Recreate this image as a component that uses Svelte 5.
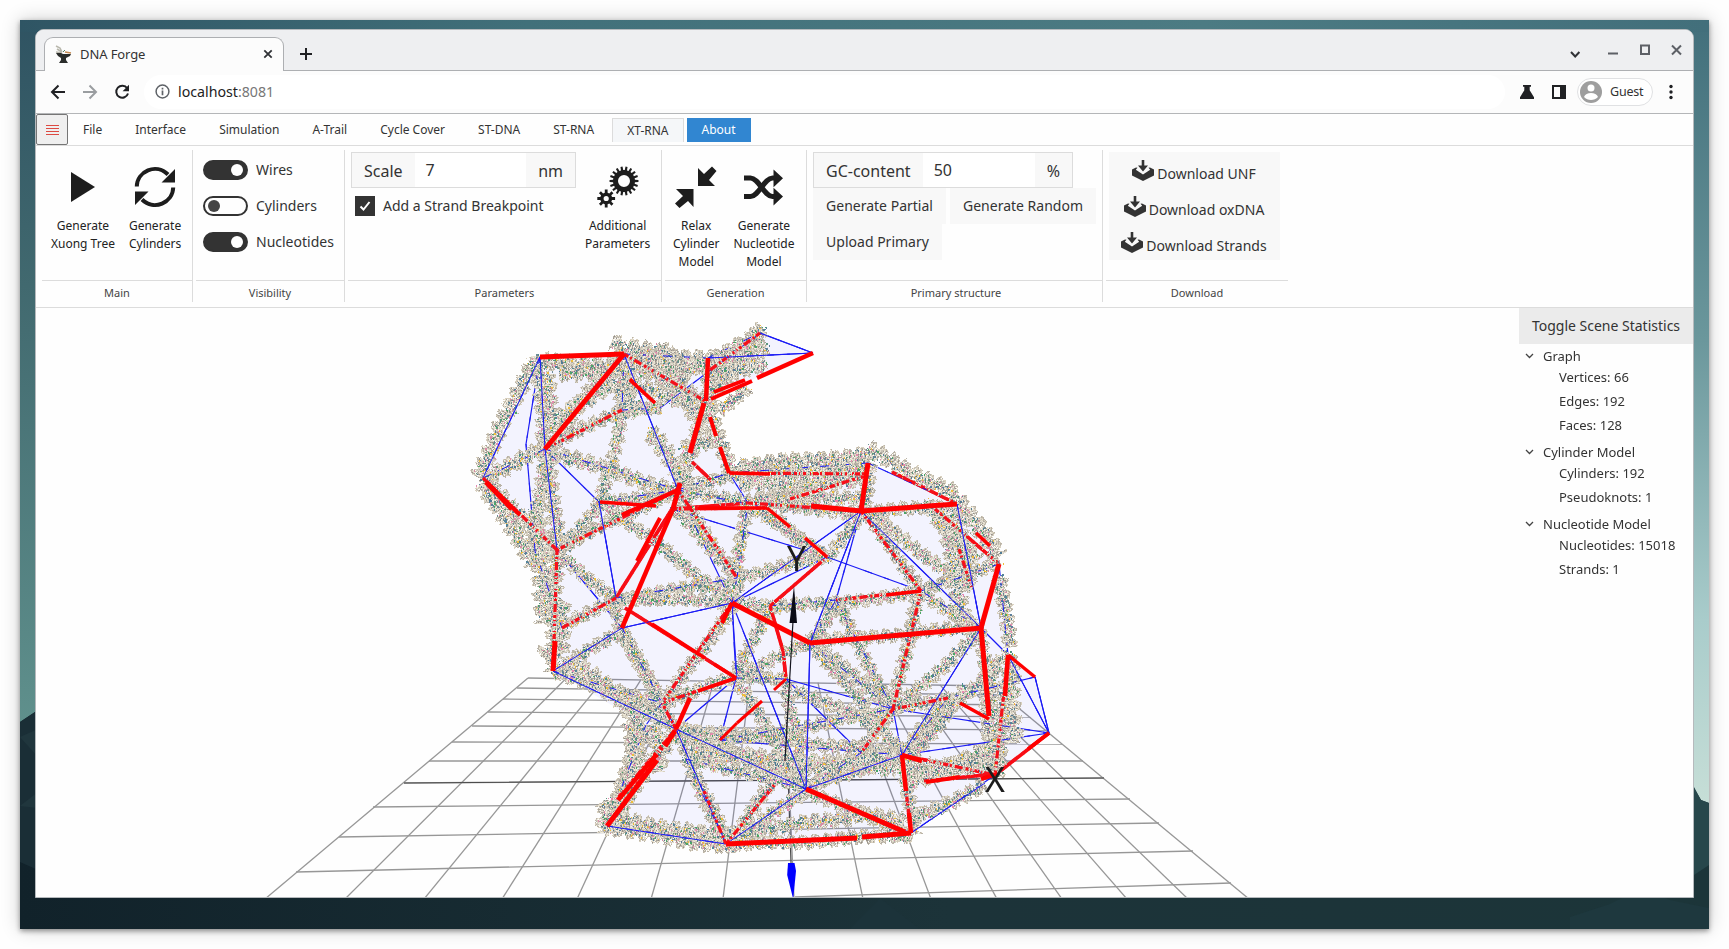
<script>
  import { onMount } from 'svelte';

  const tabs = ['File', 'Interface', 'Simulation', 'A-Trail', 'Cycle Cover', 'ST-DNA', 'ST-RNA', 'XT-RNA', 'About'];
  const toggles = [
    { name: 'Wires', on: true },
    { name: 'Cylinders', on: false },
    { name: 'Nucleotides', on: true }
  ];
  const downloads = ['Download UNF', 'Download oxDNA', 'Download Strands'];
  const stats = [
    { title: 'Graph', rows: ['Vertices: 66', 'Edges: 192', 'Faces: 128'] },
    { title: 'Cylinder Model', rows: ['Cylinders: 192', 'Pseudoknots: 1'] },
    { title: 'Nucleotide Model', rows: ['Nucleotides: 15018', 'Strands: 1'] }
  ];

  // Scene origin in window coordinates
  const OX = 36, OY = 307;

  // Mesh vertices after projection
  const V = {
    A: [540, 356], B: [624, 353], C: [708, 357], D: [760, 332], E: [813, 352], F: [705, 400],
    G: [545, 448], H: [483, 477], I: [729, 472], J: [678, 489], K: [599, 501], L: [557, 549],
    M: [616, 597], N: [622, 627], O: [732, 602], P: [622, 409], Q: [672, 508], R: [767, 507],
    S: [827, 556], T: [737, 577], U: [868, 462], V: [861, 510], W: [957, 503], X: [999, 563],
    Y: [981, 627], Z: [810, 642], a: [921, 590], b: [836, 599], c: [770, 605], d: [736, 677],
    e: [786, 678], f: [893, 708], g: [948, 697], h: [1008, 654], i: [1035, 676], j: [1049, 732],
    k: [806, 788], l: [726, 843], m: [911, 832], n: [902, 754], o: [995, 774], p: [861, 752],
    q: [720, 739], r: [553, 670], s: [662, 702], t: [676, 728], u: [607, 825], v: [617, 798],
    w: [646, 724], x: [526, 443], y: [535, 550], z: [660, 407], 1: [748, 502], 2: [970, 588],
    3: [562, 627], 4: [773, 782], 5: [686, 758]
  };
  const pairs = (s) => s.split(' ').map((p) => [...V[p[0]], ...V[p[1]]]);

  const blue = pairs(
    'AH AG Ax xy GH GJ GL BJ BP BC CD DE CE JI JR KM KJ KG MT NO rN Nt JO OT OV OS Od ZV Zb Zf Zk Ok VY WY Xh Yh hj ij ih ig Yn bf Sa de dq dt ef qf qn tl tk rt rs kn kl km mo ul wv fn ng UI UW CF Pz Dz Vb T1 1I bc 5l 5k jf jn QS Ya NL 3y sw ep Xa lt kp'
  );
  // Tree edges behind the strands
  const redBack = [
    ...pairs('HL JL Lr BF QR QM M3 Q1 1V ho gf fa fp ab aV cS no nm Os ts tu tv PG JT jo'),
    [770, 605, 783, 650], [783, 650, 786, 678], [625, 607, 736, 677], [736, 677, 662, 702],
    [630, 378, 656, 403], [959, 548, 972, 588], [726, 843, 775, 783], [726, 843, 704, 790],
    [924, 780, 995, 773], [935, 508, 999, 563], [892, 471, 957, 503], [790, 498, 868, 474],
    [729, 472, 868, 473], [760, 332, 706, 372], [692, 461, 712, 480]
  ];
  const redFront = [
    [540, 356, 624, 353, 5], [624, 353, 545, 448, 5], [708, 357, 706, 400, 4.5], [704, 402, 690, 452, 5], [680, 482, 673, 508, 5],
    [673, 508, 622, 627, 4.5], [678, 489, 622, 514, 4.5], [486, 481, 512, 508, 5], [555, 640, 553, 670, 5],
    [714, 391, 745, 379, 4], [757, 377, 813, 352, 4.5], [711, 398, 752, 380, 4],
    [710, 416, 716, 435, 4], [720, 446, 729, 472, 4], [730, 472, 770, 473, 3.5], [868, 462, 861, 510, 5],
    [811, 505, 861, 510, 5], [861, 510, 957, 503, 5], [698, 507, 767, 507, 3.5], [600, 501, 656, 505, 3.5],
    [767, 507, 790, 526, 3.5], [805, 537, 827, 556, 3.5], [732, 602, 810, 642, 5], [810, 642, 981, 627, 5],
    [981, 627, 999, 563, 5], [981, 627, 989, 715, 5], [1008, 654, 1035, 676, 3.5], [1049, 732, 1028, 748, 3.5],
    [1008, 654, 1005, 695, 4.500], [886, 594, 921, 590, 3.5], [652, 623, 705, 657, 3.5], [714, 663, 736, 677, 3.5],
    [736, 677, 698, 690, 3.5], [960, 702, 989, 718, 3.5], [786, 678, 774, 689, 3], [762, 700, 737, 722, 3],
    [737, 722, 720, 739, 3], [902, 754, 906, 790, 4.5], [909, 812, 911, 832, 4.5], [806, 788, 905, 831, 5], [726, 843, 857, 837, 5],
    [862, 836, 911, 832, 5], [657, 759, 607, 825, 5], [657, 753, 618, 799, 4.500], [675, 730, 665, 745, 5], [676, 728, 690, 697, 4.500],
    [732, 602, 722, 622, 4], [926, 781, 960, 776, 4], [660, 517, 637, 560, 4], [902, 754, 922, 760, 4.5],
    [976, 532, 990, 545, 3.5], [630, 379, 655, 402, 3.5], [486, 481, 520, 514, 4], [981, 778, 997, 773, 4]
  ];

  // Ground plane
  const rows = [
    [528, 677, 992, 685], [517, 687, 1003, 694], [503, 698, 1016, 704], [488, 711, 1031, 716], [472, 725, 1048, 729],
    [452, 741, 1062, 743], [429, 760, 1083, 760], [404, 782, 1104, 777], [373, 806, 1130, 798], [339, 836, 1159, 822],
    [296, 871, 1193, 850], [795, 896, 1231, 882]
  ];
  const topX = [528, 566, 604, 641, 678, 714, 750, 785, 818, 850, 881, 911, 940, 967, 992];
  const botX = [265, 345, 424, 502, 577, 651, 723, 794, 863, 931, 997, 1062, 1127, 1188, 1249];
  const cols = topX.map((x, i) => [x, 677 + i * 0.57, botX[i], 898]);

  const hullPoints = [...'ABCDEFIUWXhijomluwrLHA'].map((c) => V[c].join(',')).join(' ');

  // Helix axes: the strands run close to the wires; last number is the radius
  const tubes = [
    ...pairs('KJ JI J1 IU 1U UV VW 1V W2 V2 Va ab aY LJ LK rN MN M3 ML MT JT T1 OT TS OM Os SR bc Zf Zn ZY Yo ho hn gf fa gn fp ed ds dk tk tl tn lm lk kn km nm pn pk uw ut vw rs qt 5l 5k 4l Nt cO Xa OK KP zP Pz PG qf Gy Ns SV bf Zd cd bZ Yf ek QT 1S').map((e) => [...e, 6.4]),
    ...pairs('AG BF BP CF CD DF FJ GH GJ GL HL Lr ul FI BC GB').map((e) => [...e, 7.8]),
    [533, 362, 478, 475, 8], [484, 482, 535, 560, 9], [560, 600, 557, 650, 9], [530, 510, 545, 560, 10], [535, 540, 546, 620, 11],
    [548, 650, 545, 656, 8], [568, 660, 650, 712, 10], [628, 695, 634, 760, 9], [655, 700, 655, 770, 9], [640, 720, 625, 800, 8],
    [622, 345, 612, 341, 8], [628, 348, 700, 365, 9], [545, 362, 690, 372, 9], [640, 352, 730, 372, 9], [625, 380, 690, 405, 8],
    [560, 372, 640, 366, 9], [605, 375, 640, 410, 9], [660, 345, 700, 420, 8], [545, 375, 552, 430, 8], [560, 415, 610, 380, 8],
    [738, 464, 868, 452, 8], [740, 482, 860, 478, 8], [750, 498, 860, 495, 7], [868, 450, 955, 495, 8],
    [955, 497, 996, 556, 9], [1001, 575, 1010, 645, 7], [905, 768, 1000, 760, 11], [905, 785, 990, 750, 9],
    [690, 740, 800, 770, 9], [690, 752, 895, 768, 8], [990, 660, 993, 760, 9], [1008, 665, 1012, 740, 9],
    [762, 328, 745, 345, 8], [765, 345, 712, 366, 9], [765, 362, 715, 372, 8], [745, 385, 718, 408, 6],
    [945, 515, 965, 620, 9], [925, 505, 975, 560, 8], [650, 430, 690, 480, 9], [607, 800, 607, 830, 10],
    [610, 816, 725, 834, 8], [732, 830, 850, 815, 7], [850, 815, 903, 820, 8], [800, 770, 895, 755, 8], [760, 500, 820, 508, 7],
    [915, 818, 985, 785, 7], [684, 450, 712, 440, 9], [965, 690, 900, 770, 7], [795, 690, 885, 730, 7]
  ];

  let layer;
  onMount(() => {
    const ctx = layer.getContext('2d');
    let seed = 9157;
    const rnd = () => {
      seed = (seed * 1664525 + 1013904223) >>> 0;
      return seed / 4294967296;
    };
    const light = ['#f0ead9', '#e8e1cf', '#e2dccd', '#d9d2c2', '#f8f4e8', '#e6e2d8', '#d8d3c8'];
    const shade = ['#b3aea4', '#a6a198', '#c3beb2', '#958f88', '#cbc5b9'];
    const bases = ['#4f7a94', '#54859a', '#5c957c', '#4aa566', '#e58ab0', '#eebd3c', '#6f8c93', '#d88aa5', '#5a7f9c'];
    const pick = (l) => l[(rnd() * l.length) | 0];
    const ink = (c, x, y, w, h) => {
      ctx.fillStyle = c;
      ctx.fillRect(Math.round(x) - OX, Math.round(y) - OY, w, h);
    };
    for (const [x1, y1, x2, y2, R] of tubes) {
      const len = Math.hypot(x2 - x1, y2 - y1);
      const ux = (x2 - x1) / len, uy = (y2 - y1) / len;
      const start = rnd() * 6;
      const side = rnd() < 0.5 ? -1.5 : 1.5;
      const pitch = 9 + R * 0.5;
      for (let s = -1; s < len + 1; s += 0.7) {
        const ph = start + (s * Math.PI * 2) / pitch;
        const c = side + Math.sin(ph) * R * 0.3 + Math.sin(s / 17 + start) * 1.2;
        const h = R * (0.76 + 0.2 * Math.sin(ph * 2 + 1)) + rnd() * 1.6;
        for (let o = -h; o <= h; o += 0.9) {
          if (rnd() < 0.13) continue;
          const edge = Math.abs(o) > h - 1.3;
          // Ribs of light backbone separated by darker gaps
          const rib = Math.sin(s * 2.1 + o * 0.35 + start) > -0.25;
          const b = c + o;
          const color = edge ? (rnd() < 0.5 ? '#d9d1bf' : '#b9b3a7') : rib === rnd() < 0.8 ? pick(light) : pick(shade);
          ink(color, x1 + ux * s - uy * b, y1 + uy * s + ux * b, 1, 1);
        }
        for (let k = 0; k < 2; k++) {
          if (rnd() > 0.5) continue;
          const m = c * 0.7 + (rnd() - 0.5) * 1.3 * R;
          const back = s - rnd() * 4;
          ink(pick(bases), x1 + ux * back - uy * m, y1 + uy * back + ux * m, rnd() < 0.25 ? 2 : 1, rnd() < 0.6 ? 2 : 1);
        }
      }
    }
  });

  function gear(cx, cy, outer, inner, hole, teeth) {
    let d = '';
    const step = (Math.PI * 2) / teeth;
    for (let i = 0; i < teeth; i++) {
      const t = i * step;
      for (const [r, a] of [[inner, -0.3], [outer, -0.2], [outer, 0.2], [inner, 0.3]]) {
        d += `${d ? 'L' : 'M'}${(cx + r * Math.cos(t + a * step)).toFixed(2)} ${(cy + r * Math.sin(t + a * step)).toFixed(2)}`;
      }
    }
    return `${d}ZM${cx - hole} ${cy}a${hole} ${hole} 0 1 0 ${hole * 2} 0a${hole} ${hole} 0 1 0 ${-hole * 2} 0Z`;
  }
</script>

<div class="desktop">
  <svg class="wallpaper" viewBox="0 0 1689 909" preserveAspectRatio="none">
    <defs>
      <linearGradient id="skyL" x1="0" y1="0" x2="0" y2="1">
        <stop offset="0" stop-color="#2f5362" /><stop offset=".35" stop-color="#41696f" /><stop offset="1" stop-color="#639590" />
      </linearGradient>
      <linearGradient id="skyR" x1="0" y1="0" x2="0" y2="1">
        <stop offset="0" stop-color="#426f7b" /><stop offset=".4" stop-color="#6b979c" /><stop offset=".75" stop-color="#a9cccb" /><stop offset="1" stop-color="#c9e0d8" />
      </linearGradient>
      <linearGradient id="skyT" x1="0" y1="0" x2="1" y2="0">
        <stop offset="0" stop-color="#2f5564" /><stop offset=".3" stop-color="#41707a" /><stop offset=".7" stop-color="#4c7b83" /><stop offset="1" stop-color="#426f7b" />
      </linearGradient>
      <linearGradient id="ground" x1="0" y1="0" x2="1" y2="0">
        <stop offset="0" stop-color="#11222a" /><stop offset=".55" stop-color="#1c3339" /><stop offset="1" stop-color="#1c3539" />
      </linearGradient>
    </defs>
    <rect width="100" height="760" fill="url(#skyL)" />
    <rect x="1600" width="89" height="800" fill="url(#skyR)" />
    <rect width="1689" height="12" fill="url(#skyT)" />
    <path d="M0 702 18 690 1674 768 1681 780 1689 783V909H0Z" fill="url(#ground)" />
    <path d="M0 702 18 690V850L0 842Z" fill="#1a2e36" />
    <path d="M0 717 18 709V737Z M0 786 18 772V788Z" fill="#20363d" />
    <path d="M1674 767 1681 780 1689 783V845L1674 855Z" fill="#27474b" />
    <path d="M1550 897 1590 884 1622 868 1650 880 1689 888V909H1550Z" fill="#1e383e" />
    <path d="M830 909 860 878 900 909Z" fill="#1c333a" />
  </svg>

  <div class="window">
    <header class="tabstrip">
      <div class="browser-tab">
        <svg width="18" height="18" viewBox="0 0 18 18">
          <path d="M1 1l4 2 2 4M2 4l5 3M1 7l6 1" stroke="#b9b8ad" stroke-width="1.5" fill="none" />
          <path d="M1 8h5l2 1h8l-1 2-4 2v2l2 3H4l2-3v-2L3 11Z" fill="#2a2d2b" />
          <path d="M10 7l6 1" stroke="#c58c54" stroke-width="1.3" /><path d="M8 7l2-2" stroke="#547b5e" />
        </svg>
        <span class="tab-title">DNA Forge</span>
        <svg width="10" height="10" viewBox="0 0 10 10"><path d="M1.3 1.3l7.4 7.4m0-7.4L1.3 8.7" stroke="#303236" stroke-width="1.8" /></svg>
      </div>
      <svg class="plus" width="14" height="14" viewBox="0 0 14 14"><path d="M7 1v12M1 7h12" stroke="#202124" stroke-width="2" /></svg>
      <svg class="controls" width="112" height="16" viewBox="0 0 112 16">
        <path d="M1 8l4.200 4.500 4.200-4.500" stroke="#303236" stroke-width="2" fill="none" />
        <path d="M38 9.500h10" stroke="#5d6066" stroke-width="2" />
        <rect x="71" y="1.500" width="8" height="8.500" fill="none" stroke="#5d6066" stroke-width="2" />
        <path d="M102 1.500l9 9m0-9l-9 9" stroke="#5d6066" stroke-width="2" />
      </svg>
    </header>

    <div class="addressbar">
      <div class="nav">
        <svg width="16" height="16" viewBox="0 0 16 16"><path d="M15 8H2M8.500 1.500 2 8l6.500 6.500" stroke="#202124" stroke-width="2" fill="none" /></svg>
        <svg width="16" height="16" viewBox="0 0 16 16"><path d="M1 8h13M7.500 1.500 14 8l-6.500 6.500" stroke="#9a9da0" stroke-width="2" fill="none" /></svg>
        <svg width="16" height="16" viewBox="0 0 16 16"><path d="M13.200 4.300A6 6 0 1 0 14 9.500" stroke="#202124" stroke-width="2" fill="none" /><path d="M15 .8v6.400H8.600Z" fill="#202124" /></svg>
      </div>
      <div class="omnibox">
        <svg width="15" height="15" viewBox="0 0 15 15"><circle cx="7.500" cy="7.500" r="6.400" fill="none" stroke="#5f6368" stroke-width="1.500" /><path d="M7.500 6.600v4.600M7.500 3.700v1.700" stroke="#5f6368" stroke-width="1.700" /></svg>
        <span class="url">localhost<i>:8081</i></span>
      </div>
      <svg width="16" height="16" viewBox="0 0 16 16"><path d="M4 1h8v1.800h-1.300V6.200L15 13.300V15H1V13.300L5.300 6.200V2.800H4Z" fill="#202124" /></svg>
      <svg class="side" width="16" height="16" viewBox="0 0 16 16"><path d="M1 1h14v14H1ZM3 3v10h6V3Z" fill-rule="evenodd" fill="#202124" /></svg>
      <div class="guest">
        <svg width="22" height="22" viewBox="0 0 22 22"><circle cx="11" cy="11" r="11" fill="#9e9e9e" /><circle cx="11" cy="7" r="3.500" fill="#fff" /><path d="M4 16c1.500-5.500 12.500-5.500 14 0-3.500 4-10.500 4-14 0Z" fill="#fff" /></svg>
        <span>Guest</span>
      </div>
      <svg class="kebab" width="4" height="16" viewBox="0 0 4 16"><circle cx="2" cy="2.500" r="1.700" /><circle cx="2" cy="8" r="1.700" /><circle cx="2" cy="13.500" r="1.700" /></svg>
    </div>

    <nav class="menu">
      <button class="burger" aria-label="Menu"><svg width="13" height="12" viewBox="0 0 13 12"><path d="M0 1.500h13M0 4.500h13M0 7.500h13M0 10.500h13" stroke="#dc4a42" stroke-width="1.100" /></svg></button>
      {#each tabs as t}
        <div class="menu-tab" class:open={t === 'XT-RNA'} class:about={t === 'About'}>{t}</div>
      {/each}
    </nav>

    <div class="ribbon">
      <section style:width="151px">
        <div class="body main">
          <div class="tool">
            <svg width="42" height="42" viewBox="0 0 42 42"><path d="M9 6v30l24-15Z" /></svg>
            <span>Generate<br />Xuong Tree</span>
          </div>
          <div class="tool">
            <svg width="42" height="42" viewBox="0 0 42 42">
              <path d="M2.800 20.500C3 5.500 22-3.500 34 8.500M39.200 21.500C39 36.500 20 45.500 8 33.500" fill="none" stroke="#1d1d1d" stroke-width="4" />
              <path d="M41 3v13.500H27.500ZM1 39V25.500h13.500Z" />
            </svg>
            <span>Generate<br />Cylinders</span>
          </div>
        </div>
        <footer>Main</footer>
      </section>

      <section style:width="149px">
        <div class="body visibility">
          {#each toggles as t}
            <div class="switch"><b class:on={t.on}></b><span>{t.name}</span></div>
          {/each}
        </div>
        <footer>Visibility</footer>
      </section>

      <section style:width="314px">
        <div class="body params">
          <div class="fields">
            <div class="field" style:width="225px"><span>Scale</span><em>7</em><span>nm</span></div>
            <div class="check">
              <i><svg width="12" height="12" viewBox="0 0 12 12"><path d="M1.500 6.500l3 3 6-7.500" fill="none" stroke="#fff" stroke-width="2" /></svg></i>
              <span>Add a Strand Breakpoint</span>
            </div>
          </div>
          <div class="tool">
            <svg width="42" height="42" viewBox="0 0 42 42"><path fill-rule="evenodd" d={gear(27, 15, 14.5, 11, 6, 18)} /><path fill-rule="evenodd" d={gear(9.2, 32.500, 9, 6, 2.600, 8)} /></svg>
            <span>Additional<br />Parameters</span>
          </div>
        </div>
        <footer>Parameters</footer>
      </section>

      <section style:width="142px">
        <div class="body generation">
          <div class="tool">
            <svg width="42" height="42" viewBox="0 0 42 42"><path d="M23 2v18h17l-6-6 7.500-9L37 .5l-8 7.500ZM1 23h17.500v18l-5.500-6-8.500 7L0 37.500 8 30Z" /></svg>
            <span>Relax<br />Cylinder<br />Model</span>
          </div>
          <div class="tool">
            <svg width="42" height="42" viewBox="0 0 42 42">
              <path d="M1 12h6.500c8 0 14 18.500 22 18.500H33M1 30.500h6.500c8 0 14-18.500 22-18.500H33" fill="none" stroke="#1d1d1d" stroke-width="5.200" />
              <path d="M30.500 3.500 40 12.200l-9.500 9ZM30.500 21.800 40 30.500l-9.500 9Z" />
            </svg>
            <span>Generate<br />Nucleotide<br />Model</span>
          </div>
        </div>
        <footer>Generation</footer>
      </section>

      <section style:width="293px">
        <div class="body primary">
          <div class="field" style:width="260px"><span>GC-content</span><em>50</em><span>%</span></div>
          <div class="buttons">
            <div class="button" style:width="133px">Generate Partial</div>
            <div class="button" style:width="146px">Generate Random</div>
            <div class="button" style:width="129px">Upload Primary</div>
          </div>
        </div>
        <footer>Primary structure</footer>
      </section>

      <section class="last" style:width="182px">
        <div class="body downloads">
          {#each downloads as d}
            <div class="button">
              <svg width="22" height="21" viewBox="0 0 22 21"><path d="M9.700 0h2.600v5.500H16L11 11.500 6 5.500h3.700Z" /><path d="M5.500 7.800 3.800 9.800 11 14.500l7.200-4.700-1.700-2 1.500-.4L22 9.500v6L11 21 0 15.500v-6l4-2.100Z" /></svg>{d}
            </div>
          {/each}
        </div>
        <footer>Download</footer>
      </section>
    </div>

    <main class="scene">
      <svg class="layer" viewBox="36 307 1657 590">
        <g stroke="#979797" stroke-width="1.300">
          {#each [...rows, ...cols] as [x1, y1, x2, y2]}<line {x1} {y1} {x2} {y2} />{/each}
        </g>
        <path d="M404 782 1104 777M785 681 791 862" stroke="#4c4c4c" stroke-width="1.200" />
        <polygon points={hullPoints} fill="#0000ff" fill-opacity=".045" />
        <g stroke="#1b1bf5" stroke-width="1.200">
          {#each blue as [x1, y1, x2, y2]}<line {x1} {y1} {x2} {y2} />{/each}
        </g>
        <g stroke="#fa0a12" stroke-width="3.600">
          {#each redBack as [x1, y1, x2, y2]}<line {x1} {y1} {x2} {y2} />{/each}
        </g>
      </svg>
      <canvas class="layer" width="1657" height="590" bind:this={layer}></canvas>
      <svg class="layer" viewBox="36 307 1657 590">
        <g stroke="#1b1bf5" stroke-width="1" stroke-dasharray="6 13 3 17 9 12">
          {#each blue as [x1, y1, x2, y2]}<line {x1} {y1} {x2} {y2} />{/each}
        </g>
        <path fill="none" stroke="#1b1bf5" d="M540 356 483 477M624 353 678 489M545 448 557 549M545 448 540 356M760 332 813 352 708 357M732 602 861 510 810 642M861 510 981 627 957 503M1008 654 1049 732 1035 676M732 602 737 677M726 843 676 728M553 670 622 627M553 670 676 728 806 788M607 825 726 843 806 788M743 630 806 788M810 642 806 788 902 754M981 627 902 754M911 832 985 782M732 602 622 627M599 501 616 597" />
        <g stroke="#f5101a" stroke-width="3.200" stroke-dasharray="5 2 2 3 8 3 3 2 1 3 2 5 1 2">
          {#each redBack as [x1, y1, x2, y2]}<line {x1} {y1} {x2} {y2} />{/each}
        </g>
        <g stroke="#ff0000">
          {#each redFront as [x1, y1, x2, y2, w]}<line {x1} {y1} {x2} {y2} stroke-width={w} />{/each}
        </g>
        <path d="M793 620 785 760" stroke="#15151f" stroke-width="1.200" />
        <path d="M794 585 797 622H789.500Z" fill="#0b0b16" />
        <path d="M788 862h6.500l1.500 8-2.800 28-6-24Z" fill="#0000ff" />
        <text x="796.500" y="570" text-anchor="middle">Y</text>
        <text x="995" y="791" text-anchor="middle">X</text>
      </svg>
      <aside>
        <h2>Toggle Scene Statistics</h2>
        {#each stats as s}
          <div class="stat-title"><svg width="9" height="6" viewBox="0 0 9 6"><path d="M1 1l3.500 3.500L8 1" fill="none" stroke="#444" stroke-width="1.300" /></svg>{s.title}</div>
          {#each s.rows as r}<div class="stat">{r}</div>{/each}
        {/each}
      </aside>
    </main>
  </div>
</div>

<style>
  :global(body) { background: #fefefe; overflow: hidden; }
  .desktop, .desktop * { box-sizing: border-box; }
  .desktop {
    position: relative; width: 1689px; height: 909px; margin: 20px; padding: 9px 15px 11px;
    font-family: 'Noto Sans', 'Open Sans', sans-serif; color: #333;
    box-shadow: 0 2px 5px rgba(0, 0, 0, .4), 0 0 18px rgba(0, 0, 0, .2);
  }
  .wallpaper { position: absolute; inset: 0; width: 1689px; height: 909px; }
  .window {
    position: relative; width: 1659px; height: 869px; border: 1px solid #b6babd; border-radius: 9px 9px 0 0;
    background: #fefefe; overflow: hidden; display: flex; flex-direction: column;
  }
  .window svg { display: block; flex: none; }
  .tabstrip { height: 41px; background: #eeeff1; border-bottom: 1px solid #adafb2; display: flex; align-items: center; padding: 0 9px 0 8px; flex: none; }
  .browser-tab {
    align-self: flex-end; width: 240px; height: 34px; margin-bottom: -1px; padding: 0 10px 1px 10px; display: flex; align-items: center;
    background: #fcfcfc; border: 1px solid #adafb2; border-bottom: 0; border-radius: 9px 9px 0 0;
  }
  .tab-title { flex: 1; margin-left: 7px; font-size: 13px; color: #333; letter-spacing: -.1px; }
  .plus { margin-left: 15px; margin-top: 7px; }
  .controls { margin-left: auto; margin-top: 3px; margin-right: 2px; }
  .addressbar { height: 43px; background: #fcfcfc; border-bottom: 1px solid #b4b6b8; display: flex; align-items: center; padding: 0 0 1px 14px; flex: none; }
  .nav { display: flex; gap: 16px; width: 94px; }
  .omnibox { width: 1361px; height: 34px; margin-right: 14px; border-radius: 17px; background: #fff; display: flex; align-items: center; padding-left: 11px; }
  .url { margin-left: 8px; font-size: 14.200px; color: #222; }
  .url i { font-style: normal; color: #777; }
  .side { margin-left: 16px; }
  .guest { margin-left: 10px; width: 76px; height: 28px; border: 1px solid #e0e1e3; border-radius: 14px; display: flex; align-items: center; padding-left: 2px; gap: 8px; font-size: 12.500px; letter-spacing: -.2px; background: #fff; }
  .kebab { margin-left: 16px; fill: #202124; }
  .menu { height: 32px; border-bottom: 1px solid #dcdcdc; display: flex; gap: 3px; font-size: 12px; flex: none; }
  .burger { width: 32px; height: 31px; margin: 0 -3px 0 0; padding: 0; border: 1px solid #757575; border-radius: 2px; background: #efefef; display: flex; align-items: center; justify-content: center; }
  .menu-tab { padding: 0 15px; line-height: 31px; }
  .menu-tab.open { height: 24px; margin-top: 4px; padding: 0 14px; line-height: 23px; border: 1px solid #dcdcdc; border-bottom: 0; background: #f5f7f9; }
  .menu-tab.about { height: 24px; margin-top: 4px; line-height: 23px; background: #3186d1; color: #fff; }
  .ribbon { height: 162px; border-bottom: 1px solid #dcdcdc; padding: 4px 0 0 6px; display: flex; gap: 3px; flex: none; }
  section { height: 152px; display: flex; flex-direction: column; border-right: 1px solid #dcdcdc; }
  section.last { border-right: 0; }
  .body { height: 131px; flex: none; border-bottom: 1px solid #dcdcdc; padding-top: 2px; display: flex; }
  footer { height: 20px; font-size: 11px; line-height: 24px; text-align: center; color: #444; }
  .tool { padding-top: 14px; display: flex; flex-direction: column; align-items: center; font-size: 12px; line-height: 18px; color: #222; text-align: center; white-space: nowrap; }
  .tool svg { margin-bottom: 9px; fill: #1d1d1d; }
  .main { padding-left: 9px; gap: 14px; }
  .visibility { flex-direction: column; padding-left: 7px; font-size: 14px; }
  .switch { height: 36px; display: flex; align-items: center; gap: 8px; }
  .switch span, .check span { margin-top: -2px; }
  .switch b { width: 45px; height: 20px; border: 2px solid #333; border-radius: 10px; position: relative; }
  .switch b::after { content: ''; position: absolute; left: 3px; top: 2px; width: 12px; height: 12px; border-radius: 50%; background: #444; }
  .switch b.on { background: #333; }
  .switch b.on::after { left: 26px; background: #fff; }
  .params { padding-left: 3px; }
  .fields { width: 234px; }
  .field { height: 36px; border: 1px solid #dcdcdc; display: flex; font-size: 16px; line-height: 36px; }
  .field span { background: #f8f8f8; padding: 0 12px; height: 34px; }
  .field em { flex: 1; font-style: normal; padding-left: 11px; line-height: 34px; background: #fff; }
  .check { height: 36px; display: flex; align-items: center; font-size: 14px; padding-left: 4px; }
  .check i { width: 20px; height: 20px; background: #333; margin-right: 8px; display: flex; align-items: center; justify-content: center; }
  .generation { padding-left: 8px; gap: 14px; }
  .primary { flex-direction: column; padding-left: 3px; }
  .buttons { display: flex; flex-wrap: wrap; column-gap: 4px; }
  .button { height: 36px; background: #f8f8f8; display: flex; justify-content: center; font-size: 14px; line-height: 36px; white-space: nowrap; }
  .downloads { flex-direction: column; padding-left: 3px; }
  .downloads .button { width: 171px; line-height: 44px; gap: 3px; padding-right: 1px; }
  .downloads svg { margin-top: 8px; fill: #333; }
  .scene { position: relative; flex: 1; display: flex; justify-content: flex-end; }
  .layer { position: absolute; left: 0; top: 0; width: 1657px; height: 590px; }
  .scene text { font-size: 34px; fill: #1c1c1c; }
  aside { position: relative; width: 174px; font-size: 13px; }
  h2 { margin: 0 0 2px; height: 36px; background: #ebebeb; font-size: 14px; font-weight: 400; line-height: 35px; text-align: center; }
  .stat-title { height: 20px; line-height: 20px; padding-left: 6px; display: flex; align-items: center; gap: 9px; }
  .stat { height: 24px; line-height: 23px; padding-left: 40px; }
  .stat + .stat-title { margin-top: 4px; }
</style>
